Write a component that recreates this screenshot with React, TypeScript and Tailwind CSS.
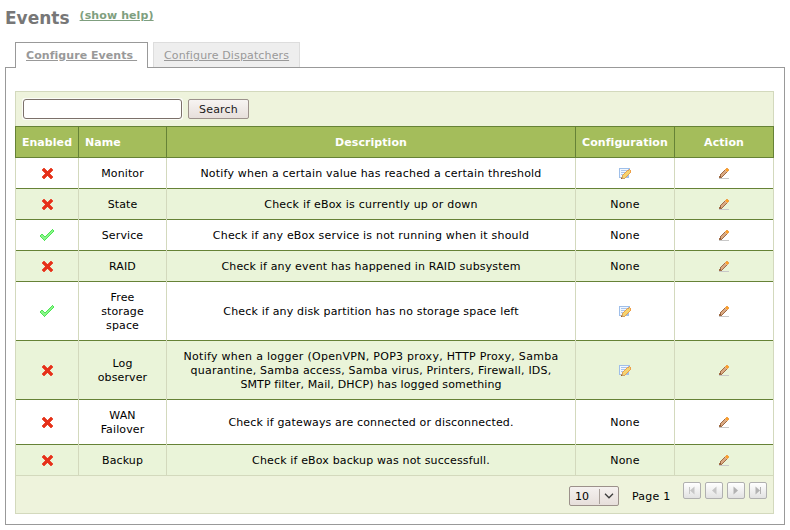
import React from 'react';

const CROSS = [
  '.rr.....rr.',
  'rRRr...rRRr',
  'rRRRr.rRRRr',
  '.rRRRRRRRr.',
  '..rRRRRRr..',
  '...RRRRR...',
  '..rRRRRRr..',
  '.rRRRRRRRr.',
  'rRRRr.rRRRr',
  'rRRr...rRRr',
  '.rr.....rr.',
];
const CHECK = [
  '............g.',
  '...........gGg',
  '..........gGGg',
  '.........gGGg.',
  '........gGGg..',
  '.gg....gGGg...',
  'gGGg..gGGg....',
  'gGGGggGGg.....',
  '.gGGGGGg......',
  '..gGGGg.......',
  '...gGg........',
  '....g.........',
];
const NOTE = [
  'bbbbbbbbbbb.',
  'bwwwwwwwwbo.',
  'bwccccccotyo',
  'bwwwwwwoyyyo',
  'bwccccoyyyyo',
  'bwwwwoyyyyo.',
  'bwccoyyyyo..',
  'bwwoyyyyob..',
  'bwwtyyyobb..',
  'bbttyyobbb..',
  '..kttt......',
];
const PENCIL = [
  '.......oo.',
  '......oOOo',
  '.....nPOOo',
  '....nTTPo.',
  '...nTTTn..',
  '..nTTTn...',
  '.nTTTn....',
  '.nTTn.....',
  'nkTn......',
  'nnn.......',
  'ssssssssss',
];
const COLORS: Record<string, string> = {
  r: '#ea5138', R: '#e5301a', g: '#4be652', G: '#8af58a',
  b: '#9fbfe9', w: '#f2f7ff', c: '#a9c5ea', y: '#f5d470', o: '#eda04a', O: '#ffa126',
  P: '#e8b98f', t: '#c9a06a', T: '#d9a982', k: '#8f5a36', n: '#a06c46', s: '#c8c8c8',
};

function Pixels({ map }: { map: string[] }) {
  const w = map[0].length;
  return (
    <svg width={w} height={map.length} viewBox={`0 0 ${w} ${map.length}`} shapeRendering="crispEdges" className="block shrink-0">
      {map.flatMap((row, y) =>
        row.split('').map((c, x) => (c === '.' ? null : <rect key={`${x}-${y}`} x={x} y={y} width="1" height="1" fill={COLORS[c]} />)),
      )}
    </svg>
  );
}

type Line = [text: string, tracking: string];
type Row = { on?: boolean; name: string[]; desc: Line[]; config?: boolean; h: string };
const ROWS: Row[] = [
  { name: ['Monitor'], desc: [['Notify when a certain value has reached a certain threshold', 'tracking-[0.19px]']], config: true, h: 'h-[31px]' },
  { name: ['State'], desc: [['Check if eBox is currently up or down', 'tracking-[0.22px]']], h: 'h-[31px]' },
  { on: true, name: ['Service'], desc: [['Check if any eBox service is not running when it should', 'tracking-[0.2px]']], h: 'h-[31px]' },
  { name: ['RAID'], desc: [['Check if any event has happened in RAID subsystem', 'tracking-[0.17px]']], h: 'h-[31px]' },
  { on: true, name: ['Free', 'storage', 'space'], desc: [['Check if any disk partition has no storage space left', 'tracking-[0.17px]']], config: true, h: 'h-[59px]' },
  {
    name: ['Log', 'observer'],
    desc: [
      ['Notify when a logger (OpenVPN, POP3 proxy, HTTP Proxy, Samba', 'tracking-[0.28px]'],
      ['quarantine, Samba access, Samba virus, Printers, Firewall, IDS,', 'tracking-[0.2px]'],
      ['SMTP filter, Mail, DHCP) has logged something', 'tracking-[0.11px]'],
    ],
    config: true,
    h: 'h-[59px]',
  },
  { name: ['WAN', 'Failover'], desc: [['Check if gateways are connected or disconnected.', 'tracking-[0.15px]']], h: 'h-[45px]' },
  { name: ['Backup'], desc: [['Check if eBox backup was not successfull.', 'tracking-[0.15px]']], h: 'h-[31px]' },
];

const COLS = 'grid grid-cols-[63px_88px_409px_99px_99px]';

function Cell({ children, last, text }: { children: React.ReactNode; last: boolean; text?: boolean }) {
  return (
    <div className="flex border-r border-[#d3d9bd]">
      <div
        className={`flex flex-1 flex-col items-center justify-center border-b whitespace-nowrap ${text ? 'pt-[2px]' : ''} ${last ? 'border-[#d3d9bd]' : 'border-[#668236]'}`}
      >
        {children}
      </div>
    </div>
  );
}

function PageButton({ d, fill }: { d: string; fill: string }) {
  return (
    <button className="flex h-[17px] w-[18px] items-center justify-center rounded-[2px] border border-[#b0b0b0] bg-linear-to-b from-white to-[#e2e2e2]">
      <svg width="10" height="9" viewBox="0 0 10 9" className="block">
        <path d={d} fill={fill} />
      </svg>
    </button>
  );
}

export default function App() {
  return (
    <div className="flex h-[530px] w-[790px] flex-col overflow-hidden bg-white pl-[5px] font-['DejaVu_Sans',sans-serif] text-[11px] leading-[14px] text-black">
      <header className="flex h-[42px] items-start">
        <h1 className="pt-[7px] text-[17px] leading-[22px] font-bold text-[#777777]">Events</h1>
        <a className="mt-[9px] ml-[10px] font-bold tracking-[0.1px] text-[#7f9f7f] underline">(show help)</a>
      </header>
      <nav className="relative z-10 -mb-px flex h-[26px] items-start gap-[5px] pl-[10px]">
        <a className="h-[26px] w-[133px] border border-b-0 border-[#999999] bg-white pt-[6px] pl-[10px] font-bold tracking-[0.06px] whitespace-pre text-[#999999] underline">{'Configure Events '}</a>
        <a className="h-[25px] w-[147px] border border-b-0 border-[#dddddd] bg-[#eeeeee] pt-[6px] pl-[10px] tracking-[0.14px] text-[#999999] underline">Configure Dispatchers</a>
      </nav>
      <main className="h-[458px] w-[780px] border border-[#999999] pt-[23px] pl-[9px]">
        <div className="w-[759px]">
          <div className="flex h-[35px] items-start border border-b-0 border-[#d3d9bd] bg-[#eef3dc] pt-[6px] pl-[6px]">
            <div className="h-[22px] w-[161px] rounded-[3px] bg-[#fbfcf7] p-px">
              <input className="block h-[20px] w-[159px] rounded-[3px] border border-[#7b706a] bg-white" />
            </div>
            <button className="mt-px ml-[5px] h-[20px] w-[61px] rounded-[2px] border border-[#9c918b] bg-linear-to-b from-[#f7f4f2] to-[#e7dfdb] pt-px tracking-[0.2px] text-[#1a1a1a]">Search</button>
          </div>
          <div className={`${COLS} h-[32px] border-y border-l border-[#668236] bg-[#a4bd5b] font-bold tracking-[0.06px] text-white`}>
            {['Enabled', 'Name', 'Description', 'Configuration', 'Action'].map((h) => (
              <div key={h} className={`flex items-center border-r border-[#668236] pt-px ${h === 'Name' ? 'pl-[6px]' : 'justify-center'}`}>{h}</div>
            ))}
          </div>
          <div className="border-l border-[#d3d9bd]">
            {ROWS.map((r, i) => {
              const last = i === ROWS.length - 1;
              return (
                <div key={r.name[0]} className={`${COLS} ${r.h} ${i % 2 ? 'bg-[#eaf4d9]' : 'bg-white'}`}>
                  <Cell last={last}><Pixels map={r.on ? CHECK : CROSS} /></Cell>
                  <Cell last={last} text>{r.name.map((t) => <span key={t} className="tracking-[0.12px]">{t}</span>)}</Cell>
                  <Cell last={last} text>{r.desc.map(([t, tracking]) => <span key={t} className={tracking}>{t}</span>)}</Cell>
                  <Cell last={last} text={!r.config}>{r.config ? <Pixels map={NOTE} /> : <span className="tracking-[0.15px]">None</span>}</Cell>
                  <Cell last={last}><Pixels map={PENCIL} /></Cell>
                </div>
              );
            })}
          </div>
          <footer className="flex h-[38px] items-start justify-end border border-t-0 border-[#d3d9bd] bg-[#eef3dc] pr-[6px]">
            <div className="mt-[10px] flex h-[20px] w-[50px] items-center rounded-[2px] border border-[#9c918b] bg-linear-to-b from-[#f5f1ef] to-[#e7dfdb] pl-[5px]">
              <span className="w-[24px] pt-px">10</span>
              <span className="h-[15px] w-px bg-[#aaa19b]" />
              <svg width="10" height="6" viewBox="0 0 10 6" className="ml-[4px]">
                <path d="M1 .8 5 4.8 9 .8" fill="none" stroke="#3b3b3b" strokeWidth="1.3" />
              </svg>
            </div>
            <span className="mt-[14px] ml-[13px] w-[51px] tracking-[0.2px] whitespace-nowrap">Page 1</span>
            <div className="mt-[6px] flex gap-[4px]">
              <PageButton fill="#c6c6c6" d="M2 1h1v7H2zM7.500.5v8L3 4.500z" />
              <PageButton fill="#c6c6c6" d="M7.500.5v8L3 4.500z" />
              <PageButton fill="#b2b2b2" d="M2.500.5v8L7 4.500z" />
              <PageButton fill="#b2b2b2" d="M2.500.5v8L7 4.500zM7 1h1v7H7z" />
            </div>
          </footer>
        </div>
      </main>
    </div>
  );
}
